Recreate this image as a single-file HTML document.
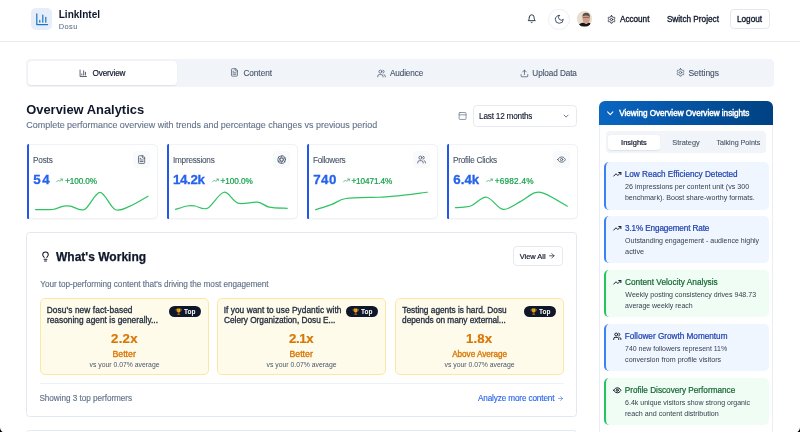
<!DOCTYPE html>
<html><head><meta charset="utf-8"><style>
html,body{margin:0;padding:0;width:800px;height:432px;overflow:hidden;background:#fff}
body{position:relative;font-family:"Liberation Sans",sans-serif;will-change:transform}
.t{position:absolute;white-space:nowrap}
.b{position:absolute}
.i{position:absolute;overflow:visible}
</style></head><body>
<div class="b" style="left:0.00px;top:41.00px;width:800.00px;height:1.00px;background:#e9edf2"></div>
<div class="b" style="left:31.00px;top:8.00px;width:21.30px;height:21.60px;background:#e6eff9;border-radius:5px"></div>
<svg class="i" style="left:34.75px;top:12.10px;width:14.40px;height:14.40px;" viewBox="0 0 24 24" fill="none" stroke="#1f74bf" stroke-width="2" stroke-linecap="round" stroke-linejoin="round"><path d="M3 3v18h18"/><path d="M18 17V9"/><path d="M13 17V5"/><path d="M8 17v-3"/></svg>
<div class="t" style="left:58.72px;top:10.00px;font-size:10.069px;line-height:10.069px;letter-spacing:0.000px;font-weight:700;color:#0f172a;">LinkIntel</div>
<div class="t" style="left:58.79px;top:23.00px;font-size:7.400px;line-height:7.400px;letter-spacing:0.444px;font-weight:400;color:#64748b;-webkit-text-stroke:0.1px #64748b">Dosu</div>
<svg class="i" style="left:526.60px;top:14.40px;width:9.40px;height:9.40px;" viewBox="0 0 24 24" fill="none" stroke="#1e293b" stroke-width="2.3" stroke-linecap="round" stroke-linejoin="round"><path d="M6 8a6 6 0 0 1 12 0c0 7 3 9 3 9H3s3-2 3-9"/><path d="M10.3 21a1.94 1.94 0 0 0 3.4 0"/></svg>
<div class="b" style="left:548.30px;top:8.50px;width:21.30px;height:21.30px;border:1px solid #eceff4;border-radius:50%;box-sizing:border-box"></div>
<svg class="i" style="left:553.60px;top:13.80px;width:10.60px;height:10.60px;" viewBox="0 0 24 24" fill="none" stroke="#2d3e5c" stroke-width="2.0" stroke-linecap="round" stroke-linejoin="round"><path d="M12 3a6 6 0 0 0 9 9 9 9 0 1 1-9-9Z"/></svg>
<div class="b" style="left:577px;top:11.3px;width:15.4px;height:15.4px;border-radius:50%;overflow:hidden;background:#e6dfcf"><svg class="i" style="left:0;top:0;width:15.4px;height:15.4px;filter:blur(0.35px)" viewBox="0 0 20 20"><ellipse cx="12" cy="10.2" rx="4.8" ry="5.8" fill="#d39c86"/><path d="M7 8 C6.8 3.5 9.5 2.4 12.2 2.4 C15.2 2.4 17 4.2 16.8 8.5 L15.8 6.8 C14 5.6 10 5.4 8 6.6 Z" fill="#5b4d47"/><path d="M7.4 8.6 L16.6 8.2" stroke="#3d3030" stroke-width="0.9" opacity="0.7"/><path d="M1 20 C2.5 16.5 5.5 15 8.5 15.2 L12 17 L15 15.2 C17.5 15.4 19 17 19.5 20 Z" fill="#141618"/></svg></div>
<svg class="i" style="left:606.50px;top:14.60px;width:9.00px;height:9.00px;" viewBox="0 0 24 24" fill="none" stroke="#1e293b" stroke-width="2.4" stroke-linecap="round" stroke-linejoin="round"><path d="M12.22 2h-.44a2 2 0 0 0-2 2v.18a2 2 0 0 1-1 1.73l-.43.25a2 2 0 0 1-2 0l-.15-.08a2 2 0 0 0-2.73.73l-.22.38a2 2 0 0 0 .73 2.73l.15.1a2 2 0 0 1 1 1.72v.51a2 2 0 0 1-1 1.74l-.15.09a2 2 0 0 0-.73 2.73l.22.38a2 2 0 0 0 2.73.73l.15-.08a2 2 0 0 1 2 0l.43.25a2 2 0 0 1 1 1.73V20a2 2 0 0 0 2 2h.44a2 2 0 0 0 2-2v-.18a2 2 0 0 1 1-1.730l.43-.25a2 2 0 0 1 2 0l.15.08a2 2 0 0 0 2.73-.73l.22-.39a2 2 0 0 0-.73-2.73l-.15-.08a2 2 0 0 1-1-1.74v-.5a2 2 0 0 1 1-1.74l.15-.09a2 2 0 0 0 .73-2.73l-.22-.38a2 2 0 0 0-2.73-.73l-.15.08a2 2 0 0 1-2 0l-.43-.25a2 2 0 0 1-1-1.73V4a2 2 0 0 0-2-2z"/><circle cx="12" cy="12" r="3"/></svg>
<div class="t" style="left:619.98px;top:16.00px;font-size:8.200px;line-height:8.200px;letter-spacing:-0.023px;font-weight:400;color:#0f172a;-webkit-text-stroke:0.3px #0f172a">Account</div>
<div class="t" style="left:666.88px;top:16.00px;font-size:8.221px;line-height:8.221px;letter-spacing:0.000px;font-weight:400;color:#0f172a;-webkit-text-stroke:0.3px #0f172a">Switch Project</div>
<div class="b" style="left:730.30px;top:9.20px;width:39.50px;height:19.80px;border:1px solid #e2e8f0;border-radius:4px;box-sizing:border-box;background:#fff"></div>
<div class="t" style="left:736.92px;top:16.00px;font-size:8.256px;line-height:8.256px;letter-spacing:0.000px;font-weight:400;color:#0f172a;-webkit-text-stroke:0.3px #0f172a">Logout</div>
<div class="b" style="left:26.00px;top:58.70px;width:748.00px;height:28.10px;background:#f1f5f9;border-radius:4.5px"></div>
<div class="b" style="left:28.20px;top:60.60px;width:148.80px;height:24.40px;background:#fff;border-radius:3.5px;box-shadow:0 0.5px 1px rgba(15,23,42,.08)"></div>
<svg class="i" style="left:79.10px;top:68.60px;width:8.60px;height:8.60px;" viewBox="0 0 24 24" fill="none" stroke="#1e293b" stroke-width="2" stroke-linecap="round" stroke-linejoin="round"><path d="M3 3v18h18"/><path d="M18 17V9"/><path d="M13 17V5"/><path d="M8 17v-3"/></svg>
<div class="t" style="left:92.51px;top:70.00px;font-size:8.200px;line-height:8.200px;letter-spacing:-0.158px;font-weight:400;color:#0f172a;-webkit-text-stroke:0.18px #0f172a">Overview</div>
<svg class="i" style="left:230.30px;top:68.30px;width:8.90px;height:8.90px;" viewBox="0 0 24 24" fill="none" stroke="#475569" stroke-width="2" stroke-linecap="round" stroke-linejoin="round"><path d="M15 2H6a2 2 0 0 0-2 2v16a2 2 0 0 0 2 2h12a2 2 0 0 0 2-2V7Z"/><path d="M14 2v4a2 2 0 0 0 2 2h4"/><path d="M10 9H8"/><path d="M16 13H8"/><path d="M16 17H8"/></svg>
<div class="t" style="left:243.39px;top:70.00px;font-size:8.200px;line-height:8.200px;letter-spacing:-0.008px;font-weight:400;color:#475569;-webkit-text-stroke:0.12px #475569">Content</div>
<svg class="i" style="left:376.60px;top:68.60px;width:9.00px;height:9.00px;" viewBox="0 0 24 24" fill="none" stroke="#475569" stroke-width="2" stroke-linecap="round" stroke-linejoin="round"><path d="M16 21v-2a4 4 0 0 0-4-4H6a4 4 0 0 0-4 4v2"/><circle cx="9" cy="7" r="4"/><path d="M22 21v-2a4 4 0 0 0-3-3.87"/><path d="M16 3.13a4 4 0 0 1 0 7.75"/></svg>
<div class="t" style="left:389.98px;top:70.00px;font-size:8.200px;line-height:8.200px;letter-spacing:-0.132px;font-weight:400;color:#475569;-webkit-text-stroke:0.12px #475569">Audience</div>
<svg class="i" style="left:519.60px;top:68.50px;width:8.90px;height:8.90px;" viewBox="0 0 24 24" fill="none" stroke="#475569" stroke-width="2" stroke-linecap="round" stroke-linejoin="round"><path d="M21 15v4a2 2 0 0 1-2 2H5a2 2 0 0 1-2-2v-4"/><polyline points="17 8 12 3 7 8"/><line x1="12" x2="12" y1="3" y2="15"/></svg>
<div class="t" style="left:532.36px;top:70.00px;font-size:8.200px;line-height:8.200px;letter-spacing:-0.096px;font-weight:400;color:#475569;-webkit-text-stroke:0.12px #475569">Upload Data</div>
<svg class="i" style="left:675.50px;top:68.40px;width:9.00px;height:9.00px;" viewBox="0 0 24 24" fill="none" stroke="#475569" stroke-width="2" stroke-linecap="round" stroke-linejoin="round"><path d="M12.22 2h-.44a2 2 0 0 0-2 2v.18a2 2 0 0 1-1 1.73l-.43.25a2 2 0 0 1-2 0l-.15-.08a2 2 0 0 0-2.73.73l-.22.38a2 2 0 0 0 .73 2.73l.15.1a2 2 0 0 1 1 1.72v.51a2 2 0 0 1-1 1.74l-.15.09a2 2 0 0 0-.73 2.73l.22.38a2 2 0 0 0 2.73.73l.15-.08a2 2 0 0 1 2 0l.43.25a2 2 0 0 1 1 1.73V20a2 2 0 0 0 2 2h.44a2 2 0 0 0 2-2v-.18a2 2 0 0 1 1-1.730l.43-.25a2 2 0 0 1 2 0l.15.08a2 2 0 0 0 2.73-.73l.22-.39a2 2 0 0 0-.73-2.73l-.15-.08a2 2 0 0 1-1-1.74v-.5a2 2 0 0 1 1-1.74l.15-.09a2 2 0 0 0 .73-2.73l-.22-.38a2 2 0 0 0-2.73-.73l-.15.08a2 2 0 0 1-2 0l-.43-.25a2 2 0 0 1-1-1.73V4a2 2 0 0 0-2-2z"/><circle cx="12" cy="12" r="3"/></svg>
<div class="t" style="left:688.42px;top:69.00px;font-size:8.493px;line-height:8.493px;letter-spacing:0.000px;font-weight:400;color:#475569;-webkit-text-stroke:0.12px #475569">Settings</div>
<div class="t" style="left:26.23px;top:104.00px;font-size:12.925px;line-height:12.925px;letter-spacing:0.000px;font-weight:700;color:#0f172a;">Overview Analytics</div>
<div class="t" style="left:26.30px;top:121.00px;font-size:8.964px;line-height:8.964px;letter-spacing:0.000px;font-weight:400;color:#64748b;-webkit-text-stroke:0.12px #64748b">Complete performance overview with trends and percentage changes vs previous period</div>
<svg class="i" style="left:458.40px;top:110.60px;width:9.20px;height:9.20px;" viewBox="0 0 24 24" fill="none" stroke="#64748b" stroke-width="1.9" stroke-linecap="round" stroke-linejoin="round"><rect width="18" height="18" x="3" y="4" rx="2" ry="2"/><line x1="3" x2="21" y1="10" y2="10"/></svg>
<div class="b" style="left:472.50px;top:104.90px;width:104.50px;height:22.10px;border:1px solid #e6eaf0;border-radius:4px;box-sizing:border-box;background:#fff"></div>
<div class="t" style="left:479.07px;top:113.00px;font-size:8.200px;line-height:8.200px;letter-spacing:-0.200px;font-weight:400;color:#0f172a;-webkit-text-stroke:0.12px #0f172a">Last 12 months</div>
<svg class="i" style="left:561.60px;top:112.10px;width:8.20px;height:8.20px;" viewBox="0 0 24 24" fill="none" stroke="#475569" stroke-width="2.3" stroke-linecap="round" stroke-linejoin="round"><path d="m6 9 6 6 6-6"/></svg>
<div class="b" style="left:27.00px;top:144.30px;width:130.90px;height:74.80px;background:#fff;border:1px solid #f0f2f5;border-radius:5px;box-sizing:border-box;box-shadow:0 0.5px 1px rgba(15,23,42,.03)"></div>
<div class="b" style="left:27.00px;top:144.30px;width:2.10px;height:74.80px;background:#2456e8;border-radius:1.5px 0 0 1.5px"></div>
<div class="t" style="left:33.07px;top:157.00px;font-size:8.200px;line-height:8.200px;letter-spacing:-0.197px;font-weight:400;color:#475569;-webkit-text-stroke:0.1px #475569">Posts</div>
<div class="b" style="left:133.00px;top:150.90px;width:16.70px;height:17.40px;background:#f8fafc;border-radius:4px"></div>
<svg class="i" style="left:136.75px;top:155.00px;width:9.20px;height:9.20px;" viewBox="0 0 24 24" fill="none" stroke="#475569" stroke-width="2.1" stroke-linecap="round" stroke-linejoin="round"><path d="M15 2H6a2 2 0 0 0-2 2v16a2 2 0 0 0 2 2h12a2 2 0 0 0 2-2V7Z"/><path d="M14 2v4a2 2 0 0 0 2 2h4"/><path d="M10 9H8"/><path d="M16 13H8"/><path d="M16 17H8"/></svg>
<div class="t" style="left:33.35px;top:173.00px;font-size:13.300px;line-height:13.300px;letter-spacing:1.453px;font-weight:700;color:#2563eb;-webkit-text-stroke:0.3px #2563eb">54</div>
<svg class="i" style="left:55.70px;top:177.40px;width:6.90px;height:6.90px;" viewBox="0 0 24 24" fill="none" stroke="#22a05a" stroke-width="2.3" stroke-linecap="round" stroke-linejoin="round"><polyline points="22 7 13.5 15.5 8.5 10.5 2 17"/><polyline points="16 7 22 7 22 13"/></svg>
<div class="t" style="left:65.21px;top:178.00px;font-size:8.200px;line-height:8.200px;letter-spacing:-0.131px;font-weight:400;color:#16a34a;-webkit-text-stroke:0.22px #16a34a">+100.0%</div>
<svg class="i" style="left:0;top:0;width:800px;height:432px" viewBox="0 0 800 432"><path d="M35.50,209.50 C38.22,209.50 48.02,210.04 52.50,209.50 C56.98,208.96 60.62,206.64 63.50,206.10 C66.38,205.56 67.14,205.56 70.50,206.10 C73.86,206.64 79.78,211.69 84.50,209.50 C89.22,207.31 95.12,192.40 100.00,192.40 C104.88,192.40 110.20,207.29 115.00,209.50 C119.80,211.71 124.72,208.32 130.00,206.20 C135.28,204.08 145.12,197.84 148.00,196.25" fill="none" stroke="#2fc463" stroke-width="1.25" stroke-linecap="round"/></svg>
<div class="b" style="left:167.00px;top:144.30px;width:130.90px;height:74.80px;background:#fff;border:1px solid #f0f2f5;border-radius:5px;box-sizing:border-box;box-shadow:0 0.5px 1px rgba(15,23,42,.03)"></div>
<div class="b" style="left:167.00px;top:144.30px;width:2.10px;height:74.80px;background:#2456e8;border-radius:1.5px 0 0 1.5px"></div>
<div class="t" style="left:172.99px;top:157.00px;font-size:8.200px;line-height:8.200px;letter-spacing:-0.240px;font-weight:400;color:#475569;-webkit-text-stroke:0.1px #475569">Impressions</div>
<div class="b" style="left:273.00px;top:150.90px;width:16.70px;height:17.40px;background:#f8fafc;border-radius:4px"></div>
<svg class="i" style="left:276.75px;top:155.00px;width:9.20px;height:9.20px;" viewBox="0 0 24 24" fill="none" stroke="#475569" stroke-width="2.1" stroke-linecap="round" stroke-linejoin="round"><circle cx="12" cy="12" r="10"/><path d="m14.31 8 5.74 9.94"/><path d="M9.69 8h11.48"/><path d="m7.38 12 5.74-9.94"/><path d="M9.69 16 3.95 6.06"/><path d="M14.31 16H2.83"/><path d="m16.62 12-5.74 9.94"/></svg>
<div class="t" style="left:172.92px;top:173.00px;font-size:13.300px;line-height:13.300px;letter-spacing:-0.309px;font-weight:700;color:#2563eb;-webkit-text-stroke:0.3px #2563eb">14.2k</div>
<svg class="i" style="left:211.70px;top:177.40px;width:6.90px;height:6.90px;" viewBox="0 0 24 24" fill="none" stroke="#22a05a" stroke-width="2.3" stroke-linecap="round" stroke-linejoin="round"><polyline points="22 7 13.5 15.5 8.5 10.5 2 17"/><polyline points="16 7 22 7 22 13"/></svg>
<div class="t" style="left:220.46px;top:178.00px;font-size:8.200px;line-height:8.200px;letter-spacing:-0.048px;font-weight:400;color:#16a34a;-webkit-text-stroke:0.22px #16a34a">+100.0%</div>
<svg class="i" style="left:0;top:0;width:800px;height:432px" viewBox="0 0 800 432"><path d="M175.50,209.40 C177.37,208.86 184.08,206.54 187.20,206.00 C190.32,205.46 191.75,205.65 195.00,206.00 C198.25,206.35 202.88,210.40 207.50,208.20 C212.12,206.00 219.02,193.05 223.90,192.25 C228.78,191.45 232.62,201.62 238.00,203.20 C243.38,204.78 252.51,201.48 257.50,202.10 C262.49,202.72 264.45,206.11 269.20,207.10 C273.95,208.09 284.32,208.11 287.20,208.30" fill="none" stroke="#2fc463" stroke-width="1.25" stroke-linecap="round"/></svg>
<div class="b" style="left:307.00px;top:144.30px;width:130.90px;height:74.80px;background:#fff;border:1px solid #f0f2f5;border-radius:5px;box-sizing:border-box;box-shadow:0 0.5px 1px rgba(15,23,42,.03)"></div>
<div class="b" style="left:307.00px;top:144.30px;width:2.10px;height:74.80px;background:#2456e8;border-radius:1.5px 0 0 1.5px"></div>
<div class="t" style="left:313.07px;top:157.00px;font-size:8.200px;line-height:8.200px;letter-spacing:-0.298px;font-weight:400;color:#475569;-webkit-text-stroke:0.1px #475569">Followers</div>
<div class="b" style="left:413.00px;top:150.90px;width:16.70px;height:17.40px;background:#f8fafc;border-radius:4px"></div>
<svg class="i" style="left:416.75px;top:155.00px;width:9.20px;height:9.20px;" viewBox="0 0 24 24" fill="none" stroke="#475569" stroke-width="2.1" stroke-linecap="round" stroke-linejoin="round"><path d="M16 21v-2a4 4 0 0 0-4-4H6a4 4 0 0 0-4 4v2"/><circle cx="9" cy="7" r="4"/><path d="M22 21v-2a4 4 0 0 0-3-3.87"/><path d="M16 3.13a4 4 0 0 1 0 7.75"/></svg>
<div class="t" style="left:313.18px;top:173.00px;font-size:13.300px;line-height:13.300px;letter-spacing:0.460px;font-weight:700;color:#2563eb;-webkit-text-stroke:0.3px #2563eb">740</div>
<svg class="i" style="left:342.70px;top:177.40px;width:6.90px;height:6.90px;" viewBox="0 0 24 24" fill="none" stroke="#22a05a" stroke-width="2.3" stroke-linecap="round" stroke-linejoin="round"><polyline points="22 7 13.5 15.5 8.5 10.5 2 17"/><polyline points="16 7 22 7 22 13"/></svg>
<div class="t" style="left:351.46px;top:178.00px;font-size:8.200px;line-height:8.200px;letter-spacing:-0.114px;font-weight:400;color:#16a34a;-webkit-text-stroke:0.22px #16a34a">+10471.4%</div>
<svg class="i" style="left:0;top:0;width:800px;height:432px" viewBox="0 0 800 432"><path d="M315.50,209.75 C318.12,208.89 327.04,206.20 331.90,204.40 C336.76,202.60 338.40,199.64 345.90,198.50 C353.40,197.36 370.99,197.62 378.75,197.25 C386.51,196.88 386.65,197.00 394.40,196.20 C402.15,195.40 421.95,192.88 427.20,192.25" fill="none" stroke="#2fc463" stroke-width="1.25" stroke-linecap="round"/></svg>
<div class="b" style="left:447.00px;top:144.30px;width:130.90px;height:74.80px;background:#fff;border:1px solid #f0f2f5;border-radius:5px;box-sizing:border-box;box-shadow:0 0.5px 1px rgba(15,23,42,.03)"></div>
<div class="b" style="left:447.00px;top:144.30px;width:2.10px;height:74.80px;background:#2456e8;border-radius:1.5px 0 0 1.5px"></div>
<div class="t" style="left:453.07px;top:157.00px;font-size:8.200px;line-height:8.200px;letter-spacing:-0.245px;font-weight:400;color:#475569;-webkit-text-stroke:0.1px #475569">Profile Clicks</div>
<div class="b" style="left:553.00px;top:150.90px;width:16.70px;height:17.40px;background:#f8fafc;border-radius:4px"></div>
<svg class="i" style="left:556.75px;top:155.00px;width:9.20px;height:9.20px;" viewBox="0 0 24 24" fill="none" stroke="#475569" stroke-width="2.1" stroke-linecap="round" stroke-linejoin="round"><path d="M2 12s3-7 10-7 10 7 10 7-3 7-10 7-10-7-10-7Z"/><circle cx="12" cy="12" r="3"/></svg>
<div class="t" style="left:453.25px;top:173.00px;font-size:13.300px;line-height:13.300px;letter-spacing:0.032px;font-weight:700;color:#2563eb;-webkit-text-stroke:0.3px #2563eb">6.4k</div>
<svg class="i" style="left:485.95px;top:177.40px;width:6.90px;height:6.90px;" viewBox="0 0 24 24" fill="none" stroke="#22a05a" stroke-width="2.3" stroke-linecap="round" stroke-linejoin="round"><polyline points="22 7 13.5 15.5 8.5 10.5 2 17"/><polyline points="16 7 22 7 22 13"/></svg>
<div class="t" style="left:494.71px;top:178.00px;font-size:8.200px;line-height:8.200px;letter-spacing:0.237px;font-weight:400;color:#16a34a;-webkit-text-stroke:0.22px #16a34a">+6982.4%</div>
<svg class="i" style="left:0;top:0;width:800px;height:432px" viewBox="0 0 800 432"><path d="M455.50,207.60 C456.86,207.52 461.38,207.44 464.00,207.10 C466.62,206.76 468.27,207.08 471.90,205.50 C475.53,203.92 481.71,196.63 486.70,197.25 C491.69,197.87 497.72,208.70 503.10,209.40 C508.48,210.10 515.16,204.29 520.30,201.60 C525.44,198.91 530.94,193.72 535.20,192.60 C539.46,191.48 541.78,192.41 546.90,194.60 C552.02,196.79 563.95,204.43 567.20,206.30" fill="none" stroke="#2fc463" stroke-width="1.25" stroke-linecap="round"/></svg>
<div class="b" style="left:26.25px;top:232.00px;width:550.45px;height:185.20px;border:1px solid #e4e9f1;border-radius:3.5px;box-sizing:border-box;background:#fff"></div>
<svg class="i" style="left:39.60px;top:250.90px;width:11.00px;height:11.00px;" viewBox="0 0 24 24" fill="none" stroke="#0f172a" stroke-width="2.2" stroke-linecap="round" stroke-linejoin="round"><path d="M15 14c.2-1 .7-1.7 1.5-2.5 1-.9 1.5-2.2 1.5-3.5A6 6 0 0 0 6 8c0 1 .2 2.2 1.5 3.5.7.7 1.3 1.5 1.5 2.5"/><path d="M9 18h6"/><path d="M10 22h4"/></svg>
<div class="t" style="left:56.00px;top:251.00px;font-size:12.028px;line-height:12.028px;letter-spacing:0.000px;font-weight:700;color:#0f172a;-webkit-text-stroke:0.25px #0f172a">What&#x27;s Working</div>
<div class="b" style="left:512.50px;top:246.20px;width:50.80px;height:19.40px;border:1px solid #e5e9ef;border-radius:4px;box-sizing:border-box;background:#fff"></div>
<div class="t" style="left:519.66px;top:253.00px;font-size:7.473px;line-height:7.473px;letter-spacing:0.000px;font-weight:400;color:#0f172a;-webkit-text-stroke:0.18px #0f172a">View All</div>
<svg class="i" style="left:548.20px;top:252.00px;width:7.60px;height:7.60px;" viewBox="0 0 24 24" fill="none" stroke="#0f172a" stroke-width="2.2" stroke-linecap="round" stroke-linejoin="round"><path d="M5 12h14"/><path d="m12 5 7 7-7 7"/></svg>
<div class="t" style="left:40.22px;top:281.00px;font-size:8.200px;line-height:8.200px;letter-spacing:-0.037px;font-weight:400;color:#64748b;-webkit-text-stroke:0.15px #64748b">Your top-performing content that&#x27;s driving the most engagement</div>
<div class="b" style="left:40.25px;top:298.25px;width:168.40px;height:76.50px;background:#fefbeb;border:1px solid #fce8a6;border-radius:5px;box-sizing:border-box"></div>
<div class="t" style="left:46.77px;top:306.00px;font-size:8.300px;line-height:8.300px;letter-spacing:0.102px;font-weight:400;color:#1e293b;-webkit-text-stroke:0.3px #1e293b">Dosu&#x27;s new fact-based</div>
<div class="t" style="left:46.91px;top:316.00px;font-size:8.300px;line-height:8.300px;letter-spacing:0.034px;font-weight:400;color:#1e293b;-webkit-text-stroke:0.3px #1e293b">reasoning agent is generally...</div>
<div class="b" style="left:169.45px;top:305.80px;width:31.70px;height:11.70px;background:#0f172a;border-radius:6px"></div>
<svg class="i" style="left:174.85px;top:307.7px;width:7.4px;height:7.4px" viewBox="0 0 24 24"><path d="M6.5 2h11v7.5a5.5 5.5 0 0 1-11 0z" fill="#e8a317"/><path d="M6.5 4.5H3.2v1.8a4 4 0 0 0 3.8 4M17.5 4.5h3.3v1.8a4 4 0 0 1-3.8 4" fill="none" stroke="#e0a020" stroke-width="1.8"/><path d="M9.5 4v5" stroke="#b8740a" stroke-width="1.4"/><path d="M14.5 4v5" stroke="#fcd34d" stroke-width="1.2"/><rect x="10.6" y="14.5" width="2.8" height="3.5" fill="#c77a0c"/><path d="M7 22c0-2.5 2-4 5-4s5 1.5 5 4z" fill="#c2680a"/></svg>
<div class="t" style="left:183.98px;top:309.00px;font-size:6.501px;line-height:6.501px;letter-spacing:0.000px;font-weight:700;color:#fff;">Top</div>
<div class="t" style="left:111.04px;top:332.00px;font-size:13.200px;line-height:13.200px;letter-spacing:0.262px;font-weight:700;color:#d97706;-webkit-text-stroke:0.2px #d97706">2.2x</div>
<div class="t" style="left:112.48px;top:350.00px;font-size:8.755px;line-height:8.755px;letter-spacing:0.000px;font-weight:400;color:#d97706;-webkit-text-stroke:0.35px #d97706">Better</div>
<div class="t" style="left:89.53px;top:362.00px;font-size:6.855px;line-height:6.855px;letter-spacing:0.000px;font-weight:400;color:#4a5568;">vs your 0.07% average</div>
<div class="b" style="left:217.25px;top:298.25px;width:168.40px;height:76.50px;background:#fefbeb;border:1px solid #fce8a6;border-radius:5px;box-sizing:border-box"></div>
<div class="t" style="left:223.68px;top:306.00px;font-size:8.300px;line-height:8.300px;letter-spacing:0.051px;font-weight:400;color:#1e293b;-webkit-text-stroke:0.3px #1e293b">If you want to use Pydantic with</div>
<div class="t" style="left:224.03px;top:316.00px;font-size:8.300px;line-height:8.300px;letter-spacing:-0.023px;font-weight:400;color:#1e293b;-webkit-text-stroke:0.3px #1e293b">Celery Organization, Dosu E...</div>
<div class="b" style="left:346.45px;top:305.80px;width:31.70px;height:11.70px;background:#0f172a;border-radius:6px"></div>
<svg class="i" style="left:351.85px;top:307.7px;width:7.4px;height:7.4px" viewBox="0 0 24 24"><path d="M6.5 2h11v7.5a5.5 5.5 0 0 1-11 0z" fill="#e8a317"/><path d="M6.5 4.5H3.2v1.8a4 4 0 0 0 3.8 4M17.5 4.5h3.3v1.8a4 4 0 0 1-3.8 4" fill="none" stroke="#e0a020" stroke-width="1.8"/><path d="M9.5 4v5" stroke="#b8740a" stroke-width="1.4"/><path d="M14.5 4v5" stroke="#fcd34d" stroke-width="1.2"/><rect x="10.6" y="14.5" width="2.8" height="3.5" fill="#c77a0c"/><path d="M7 22c0-2.5 2-4 5-4s5 1.5 5 4z" fill="#c2680a"/></svg>
<div class="t" style="left:360.98px;top:309.00px;font-size:6.501px;line-height:6.501px;letter-spacing:0.000px;font-weight:700;color:#fff;">Top</div>
<div class="t" style="left:289.04px;top:332.00px;font-size:13.200px;line-height:13.200px;letter-spacing:-0.404px;font-weight:700;color:#d97706;-webkit-text-stroke:0.2px #d97706">2.1x</div>
<div class="t" style="left:289.48px;top:350.00px;font-size:8.755px;line-height:8.755px;letter-spacing:0.000px;font-weight:400;color:#d97706;-webkit-text-stroke:0.35px #d97706">Better</div>
<div class="t" style="left:266.53px;top:362.00px;font-size:6.855px;line-height:6.855px;letter-spacing:0.000px;font-weight:400;color:#4a5568;">vs your 0.07% average</div>
<div class="b" style="left:395.25px;top:298.25px;width:168.40px;height:76.50px;background:#fefbeb;border:1px solid #fce8a6;border-radius:5px;box-sizing:border-box"></div>
<div class="t" style="left:402.26px;top:306.00px;font-size:8.300px;line-height:8.300px;letter-spacing:-0.009px;font-weight:400;color:#1e293b;-webkit-text-stroke:0.3px #1e293b">Testing agents is hard. Dosu</div>
<div class="t" style="left:402.10px;top:316.00px;font-size:8.300px;line-height:8.300px;letter-spacing:-0.042px;font-weight:400;color:#1e293b;-webkit-text-stroke:0.3px #1e293b">depends on many external...</div>
<div class="b" style="left:524.45px;top:305.80px;width:31.70px;height:11.70px;background:#0f172a;border-radius:6px"></div>
<svg class="i" style="left:529.85px;top:307.7px;width:7.4px;height:7.4px" viewBox="0 0 24 24"><path d="M6.5 2h11v7.5a5.5 5.5 0 0 1-11 0z" fill="#e8a317"/><path d="M6.5 4.5H3.2v1.8a4 4 0 0 0 3.8 4M17.5 4.5h3.3v1.8a4 4 0 0 1-3.8 4" fill="none" stroke="#e0a020" stroke-width="1.8"/><path d="M9.5 4v5" stroke="#b8740a" stroke-width="1.4"/><path d="M14.5 4v5" stroke="#fcd34d" stroke-width="1.2"/><rect x="10.6" y="14.5" width="2.8" height="3.5" fill="#c77a0c"/><path d="M7 22c0-2.5 2-4 5-4s5 1.5 5 4z" fill="#c2680a"/></svg>
<div class="t" style="left:538.98px;top:309.00px;font-size:6.501px;line-height:6.501px;letter-spacing:0.000px;font-weight:700;color:#fff;">Top</div>
<div class="t" style="left:466.02px;top:332.00px;font-size:13.200px;line-height:13.200px;letter-spacing:0.150px;font-weight:700;color:#d97706;-webkit-text-stroke:0.2px #d97706">1.8x</div>
<div class="t" style="left:452.13px;top:351.00px;font-size:8.200px;line-height:8.200px;letter-spacing:-0.040px;font-weight:400;color:#d97706;-webkit-text-stroke:0.35px #d97706">Above Average</div>
<div class="t" style="left:444.53px;top:362.00px;font-size:6.855px;line-height:6.855px;letter-spacing:0.000px;font-weight:400;color:#4a5568;">vs your 0.07% average</div>
<div class="b" style="left:40.00px;top:383.30px;width:523.50px;height:0.80px;background:#eef1f5"></div>
<div class="t" style="left:39.38px;top:395.00px;font-size:8.200px;line-height:8.200px;letter-spacing:-0.043px;font-weight:400;color:#64748b;-webkit-text-stroke:0.15px #64748b">Showing 3 top performers</div>
<div class="t" style="left:477.98px;top:395.00px;font-size:8.200px;line-height:8.200px;letter-spacing:-0.139px;font-weight:400;color:#2563eb;-webkit-text-stroke:0.12px #2563eb">Analyze more content</div>
<svg class="i" style="left:556.60px;top:394.60px;width:7.00px;height:7.00px;" viewBox="0 0 24 24" fill="none" stroke="#2563eb" stroke-width="1.8" stroke-linecap="round" stroke-linejoin="round"><path d="M5 12h14"/><path d="m12 5 7 7-7 7"/></svg>
<div class="b" style="left:26.25px;top:430.40px;width:550.45px;height:9.60px;border:1px solid #e4e9f1;border-radius:3.5px;box-sizing:border-box;background:#fff"></div>
<div class="b" style="left:599.00px;top:100.60px;width:174.30px;height:344.40px;border:1px solid #eaeef3;border-radius:6px;box-sizing:border-box;background:#fff"></div>
<div class="b" style="left:599.00px;top:100.60px;width:174.30px;height:24.20px;background:linear-gradient(90deg,#0a66c2,#004182);border-radius:6px 6px 0 0"></div>
<svg class="i" style="left:605.00px;top:107.50px;width:10.50px;height:10.50px;" viewBox="0 0 24 24" fill="none" stroke="#fff" stroke-width="2.6" stroke-linecap="round" stroke-linejoin="round"><path d="m6 9 6 6 6-6"/></svg>
<div class="t" style="left:619.21px;top:110.00px;font-size:8.200px;line-height:8.200px;letter-spacing:-0.037px;font-weight:400;color:#fff;-webkit-text-stroke:0.45px #fff">Viewing Overview Overview insights</div>
<div class="b" style="left:606.10px;top:131.20px;width:160.40px;height:21.35px;background:#f1f5f9;border-radius:4px"></div>
<div class="b" style="left:607.90px;top:134.55px;width:52.40px;height:15.05px;background:#fff;border-radius:3px;box-shadow:0 0.5px 1px rgba(15,23,42,.08)"></div>
<div class="t" style="left:621.11px;top:139.00px;font-size:7.470px;line-height:7.470px;letter-spacing:0.000px;font-weight:400;color:#0f172a;-webkit-text-stroke:0.2px #0f172a">Insights</div>
<div class="t" style="left:672.37px;top:139.00px;font-size:7.342px;line-height:7.342px;letter-spacing:0.000px;font-weight:400;color:#475569;-webkit-text-stroke:0.1px #475569">Strategy</div>
<div class="t" style="left:716.44px;top:140.00px;font-size:7.133px;line-height:7.133px;letter-spacing:0.000px;font-weight:400;color:#475569;-webkit-text-stroke:0.1px #475569">Talking Points</div>
<div class="b" style="left:603.80px;top:162.00px;width:164.95px;height:47.50px;background:#eff6ff;border-left:2px solid #3b82f6;border-radius:5px;box-sizing:border-box"></div>
<svg class="i" style="left:612.60px;top:170.30px;width:8.60px;height:8.60px;" viewBox="0 0 24 24" fill="none" stroke="#0f172a" stroke-width="2.7" stroke-linecap="round" stroke-linejoin="round"><polyline points="22 7 13.5 15.5 8.5 10.5 2 17"/><polyline points="16 7 22 7 22 13"/></svg>
<div class="t" style="left:624.72px;top:171.00px;font-size:8.200px;line-height:8.200px;letter-spacing:-0.009px;font-weight:400;color:#1e40af;-webkit-text-stroke:0.2px #1e40af">Low Reach Efficiency Detected</div>
<div class="t" style="left:625.04px;top:184.00px;font-size:7.118px;line-height:7.118px;letter-spacing:0.000px;font-weight:400;color:#374151;">26 impressions per content unit (vs 300</div>
<div class="t" style="left:624.94px;top:195.00px;font-size:7.094px;line-height:7.094px;letter-spacing:0.000px;font-weight:400;color:#374151;">benchmark). Boost share-worthy formats.</div>
<div class="b" style="left:603.80px;top:215.80px;width:164.95px;height:47.50px;background:#eff6ff;border-left:2px solid #3b82f6;border-radius:5px;box-sizing:border-box"></div>
<svg class="i" style="left:612.60px;top:224.10px;width:8.60px;height:8.60px;" viewBox="0 0 24 24" fill="none" stroke="#0f172a" stroke-width="2.7" stroke-linecap="round" stroke-linejoin="round"><polyline points="22 7 13.5 15.5 8.5 10.5 2 17"/><polyline points="16 7 22 7 22 13"/></svg>
<div class="t" style="left:625.09px;top:225.00px;font-size:8.200px;line-height:8.200px;letter-spacing:-0.142px;font-weight:400;color:#1e40af;-webkit-text-stroke:0.2px #1e40af">3.1% Engagement Rate</div>
<div class="t" style="left:625.07px;top:237.00px;font-size:7.040px;line-height:7.040px;letter-spacing:0.000px;font-weight:400;color:#374151;">Outstanding engagement - audience highly</div>
<div class="t" style="left:625.09px;top:248.00px;font-size:7.327px;line-height:7.327px;letter-spacing:0.000px;font-weight:400;color:#374151;">active</div>
<div class="b" style="left:603.80px;top:269.80px;width:164.95px;height:47.50px;background:#f0fdf4;border-left:2px solid #22c55e;border-radius:5px;box-sizing:border-box"></div>
<svg class="i" style="left:612.60px;top:278.10px;width:8.60px;height:8.60px;" viewBox="0 0 24 24" fill="none" stroke="#0f172a" stroke-width="2.7" stroke-linecap="round" stroke-linejoin="round"><polyline points="22 7 13.5 15.5 8.5 10.5 2 17"/><polyline points="16 7 22 7 22 13"/></svg>
<div class="t" style="left:624.98px;top:278.00px;font-size:8.307px;line-height:8.307px;letter-spacing:0.000px;font-weight:400;color:#166534;-webkit-text-stroke:0.2px #166534">Content Velocity Analysis</div>
<div class="t" style="left:625.36px;top:291.00px;font-size:7.054px;line-height:7.054px;letter-spacing:0.000px;font-weight:400;color:#374151;">Weekly posting consistency drives 948.73</div>
<div class="t" style="left:625.10px;top:303.00px;font-size:6.952px;line-height:6.952px;letter-spacing:0.000px;font-weight:400;color:#374151;">average weekly reach</div>
<div class="b" style="left:603.80px;top:323.80px;width:164.95px;height:47.50px;background:#eff6ff;border-left:2px solid #3b82f6;border-radius:5px;box-sizing:border-box"></div>
<svg class="i" style="left:612.60px;top:332.10px;width:8.60px;height:8.60px;" viewBox="0 0 24 24" fill="none" stroke="#0f172a" stroke-width="2.7" stroke-linecap="round" stroke-linejoin="round"><path d="M16 21v-2a4 4 0 0 0-4-4H6a4 4 0 0 0-4 4v2"/><circle cx="9" cy="7" r="4"/><path d="M22 21v-2a4 4 0 0 0-3-3.87"/><path d="M16 3.13a4 4 0 0 1 0 7.75"/></svg>
<div class="t" style="left:624.72px;top:333.00px;font-size:8.200px;line-height:8.200px;letter-spacing:-0.004px;font-weight:400;color:#1e40af;-webkit-text-stroke:0.2px #1e40af">Follower Growth Momentum</div>
<div class="t" style="left:625.05px;top:346.00px;font-size:6.953px;line-height:6.953px;letter-spacing:0.000px;font-weight:400;color:#374151;">740 new followers represent 11%</div>
<div class="t" style="left:625.10px;top:357.00px;font-size:7.127px;line-height:7.127px;letter-spacing:0.000px;font-weight:400;color:#374151;">conversion from profile visitors</div>
<div class="b" style="left:603.80px;top:377.80px;width:164.95px;height:47.50px;background:#f0fdf4;border-left:2px solid #22c55e;border-radius:5px;box-sizing:border-box"></div>
<svg class="i" style="left:612.60px;top:386.10px;width:8.60px;height:8.60px;" viewBox="0 0 24 24" fill="none" stroke="#0f172a" stroke-width="2.7" stroke-linecap="round" stroke-linejoin="round"><path d="M2 12s3-7 10-7 10 7 10 7-3 7-10 7-10-7-10-7Z"/><circle cx="12" cy="12" r="3"/></svg>
<div class="t" style="left:624.72px;top:387.00px;font-size:8.200px;line-height:8.200px;letter-spacing:-0.003px;font-weight:400;color:#166534;-webkit-text-stroke:0.2px #166534">Profile Discovery Performance</div>
<div class="t" style="left:625.05px;top:399.00px;font-size:7.041px;line-height:7.041px;letter-spacing:0.000px;font-weight:400;color:#374151;">6.4k unique visitors show strong organic</div>
<div class="t" style="left:624.93px;top:411.00px;font-size:7.173px;line-height:7.173px;letter-spacing:0.000px;font-weight:400;color:#374151;">reach and content distribution</div>
<svg class="i" style="left:0;top:0;width:800px;height:432px" viewBox="0 0 800 432"><path d="M0,427.5 A4.8,4.8 0 0 0 4.8,432.3 L0,432.3 Z" fill="#000"/><path d="M800,427.5 A4.8,4.8 0 0 1 795.2,432.3 L800,432.3 Z" fill="#000"/></svg>
</body></html>
